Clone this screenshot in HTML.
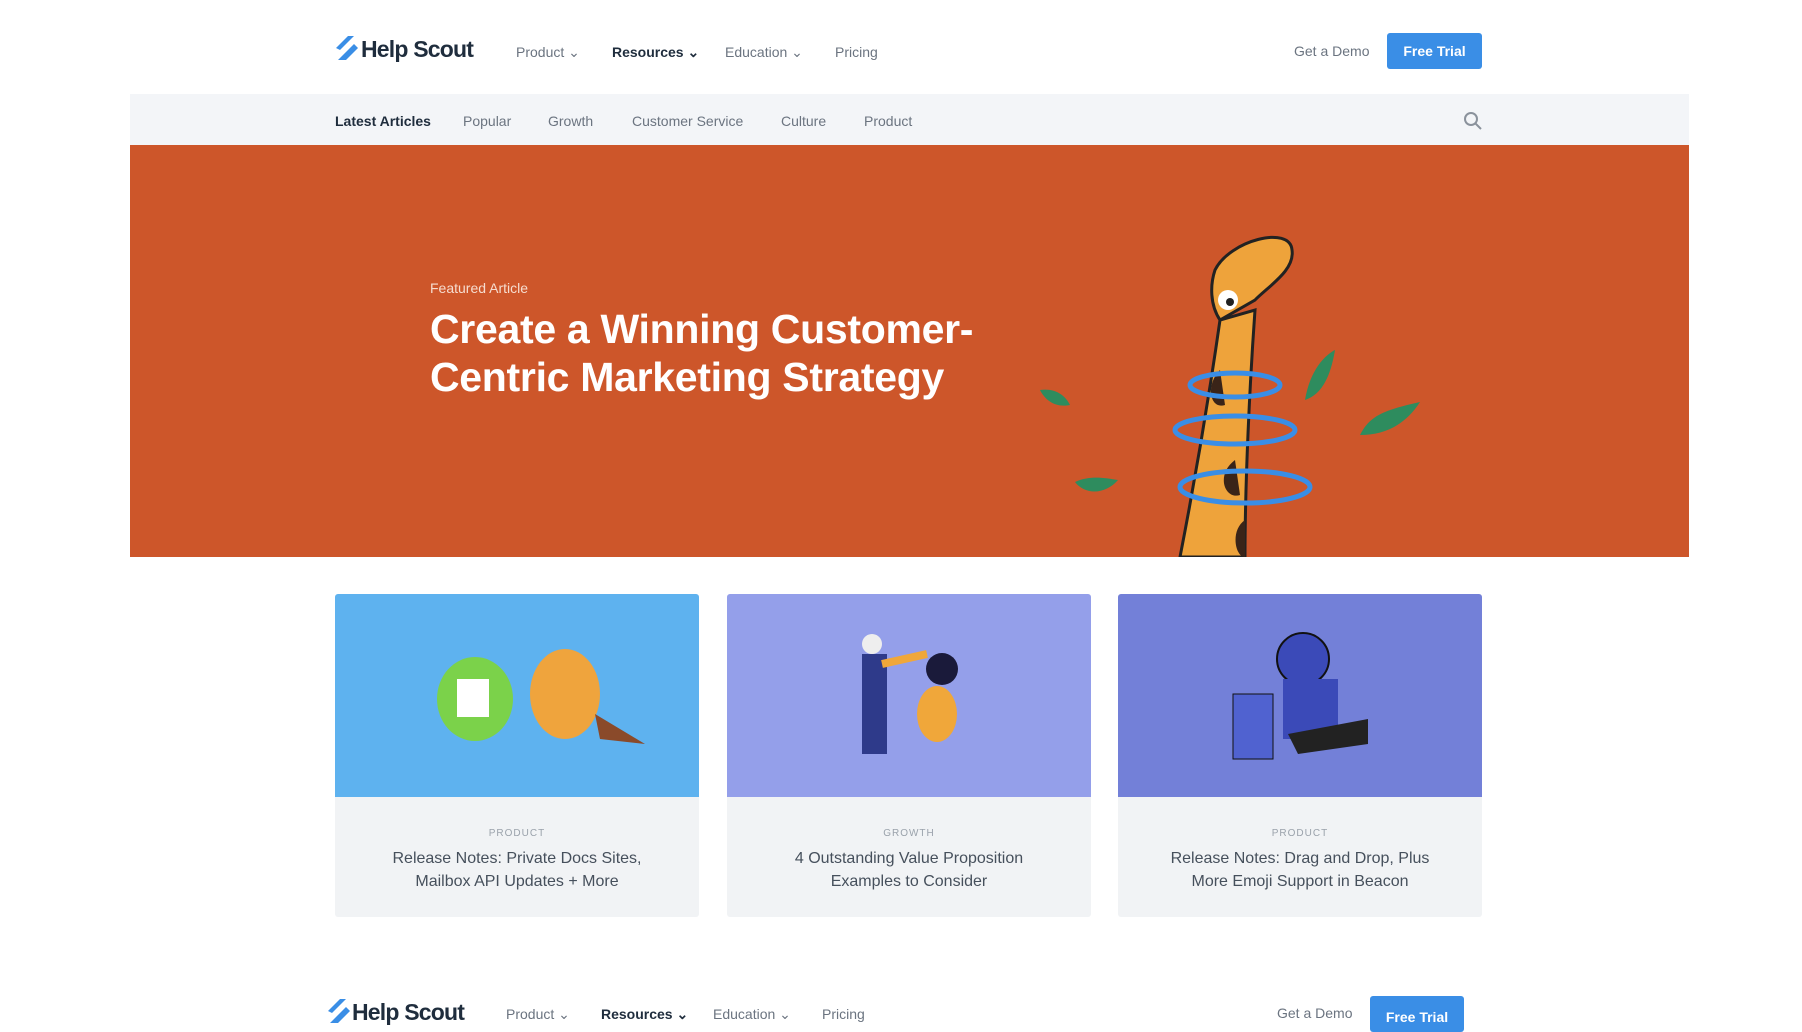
<!DOCTYPE html>
<html><head><meta charset="utf-8"><style>
*{margin:0;padding:0;box-sizing:border-box}
body{width:1802px;height:1018px;overflow:hidden;background:#fff;font-family:"Liberation Sans",sans-serif;position:relative}
.abs{position:absolute}
.nav{font-size:14px;color:#6b7480}
.logo{font-size:23px;font-weight:bold;color:#1f2d3d;letter-spacing:-0.8px}
.btn{background:#3a8ee6;color:#fff;font-weight:bold;font-size:14px;text-align:center;border-radius:3px}
.sub{font-size:14px;color:#6b7480;top:113px}
.card{position:absolute;top:594px;width:364px;height:323px;background:#f1f3f5;border-radius:3px;overflow:hidden;text-align:center}
.card .img{height:203px}
.card .cat{font-size:10px;letter-spacing:1px;color:#9aa2ab;margin-top:31px}
.card .t{font-size:16px;color:#46505c;line-height:23px;margin-top:8px}
</style></head><body>
<!-- header -->
<div class="abs" style="left:334px;top:34px;"><svg width="26" height="28" viewBox="0 0 26 28"><path d="M2 14 L14 2 L20 2 L6 16Z M4 26 L20 10 L24 14 L12 26Z M2 20 L18 4" fill="#3a8ee6"/></svg></div>
<div class="abs logo" style="left:361px;top:36px">Help Scout</div>
<div class="abs nav" style="left:516px;top:44px">Product ⌄</div>
<div class="abs nav" style="left:612px;top:44px;color:#1f2d3d;font-weight:bold">Resources ⌄</div>
<div class="abs nav" style="left:725px;top:44px">Education ⌄</div>
<div class="abs nav" style="left:835px;top:44px">Pricing</div>
<div class="abs nav" style="left:1294px;top:43px">Get a Demo</div>
<div class="abs btn" style="left:1387px;top:33px;width:95px;height:36px;line-height:36px">Free Trial</div>
<!-- subnav -->
<div class="abs" style="left:130px;top:94px;width:1559px;height:51px;background:#f3f5f8"></div>
<div class="abs sub" style="left:335px;color:#1f2d3d;font-weight:bold">Latest Articles</div>
<div class="abs sub" style="left:463px">Popular</div>
<div class="abs sub" style="left:548px">Growth</div>
<div class="abs sub" style="left:632px">Customer Service</div>
<div class="abs sub" style="left:781px">Culture</div>
<div class="abs sub" style="left:864px">Product</div>
<svg class="abs" style="left:1463px;top:111px" width="20" height="20" viewBox="0 0 20 20"><circle cx="8" cy="8" r="6" fill="none" stroke="#8a929c" stroke-width="2"/><path d="M12.5 12.5 L18 18" stroke="#8a929c" stroke-width="2"/></svg>
<!-- hero -->
<div class="abs" style="left:130px;top:145px;width:1559px;height:412px;background:#cd562a"></div>
<div class="abs" style="left:430px;top:280px;color:#f6dccf;font-size:14px">Featured Article</div>
<div class="abs" style="left:430px;top:305px;color:#fff;font-size:41px;font-weight:bold;line-height:48px;letter-spacing:-0.3px">Create a Winning Customer-<br>Centric Marketing Strategy</div>
<svg class="abs" style="left:1030px;top:230px" width="400" height="327" viewBox="0 0 400 327">
<path d="M150 327 C165 250 180 160 190 90 L225 80 C220 150 215 250 215 327Z" fill="#eea33b" stroke="#222" stroke-width="3"/>
<path d="M185 40 C200 10 260 -5 262 20 C265 40 240 55 225 70 L190 90 C180 75 180 55 185 40Z" fill="#eea33b" stroke="#222" stroke-width="3"/>
<circle cx="198" cy="70" r="10" fill="#fff"/><circle cx="200" cy="72" r="4" fill="#222"/>
<path d="M190 140 C175 155 180 180 195 175Z M205 230 C185 245 195 270 210 265Z M215 290 C200 300 205 327 215 327Z" fill="#3a2418"/>
<ellipse cx="205" cy="155" rx="45" ry="12" fill="none" stroke="#3a8ee6" stroke-width="5"/>
<ellipse cx="205" cy="200" rx="60" ry="14" fill="none" stroke="#3a8ee6" stroke-width="5"/>
<ellipse cx="215" cy="257" rx="65" ry="16" fill="none" stroke="#3a8ee6" stroke-width="5"/>
<path d="M10 160 C25 158 35 165 40 175 C25 178 15 170 10 160Z" fill="#2e8c5e"/>
<path d="M275 170 C280 140 295 125 305 120 C300 150 290 165 275 170Z" fill="#2e8c5e"/>
<path d="M330 205 C340 185 355 180 390 172 C375 195 355 205 330 205Z" fill="#2e8c5e"/>
<path d="M45 252 C60 245 75 248 88 250 C75 265 55 265 45 252Z" fill="#2e8c5e"/>
</svg>
<!-- cards -->
<div class="card" style="left:335px"><div class="img" style="background:#5eb2ef"><svg width="364" height="203"><ellipse cx="140" cy="105" rx="38" ry="42" fill="#7bd24a"/><rect x="122" y="85" width="32" height="38" fill="#fff"/><ellipse cx="230" cy="100" rx="35" ry="45" fill="#efa43d"/><path d="M260 120 L310 150 L265 145Z" fill="#8a4a2a"/></svg></div><div class="cat">PRODUCT</div><div class="t">Release Notes: Private Docs Sites,<br>Mailbox API Updates + More</div></div>
<div class="card" style="left:727px"><div class="img" style="background:#949fea"><svg width="364" height="203"><rect x="135" y="60" width="25" height="100" fill="#2e3a8a"/><circle cx="145" cy="50" r="10" fill="#eee"/><path d="M155 70 L200 60" stroke="#f0a73a" stroke-width="8"/><circle cx="215" cy="75" r="16" fill="#1a1a3a"/><ellipse cx="210" cy="120" rx="20" ry="28" fill="#f0a73a"/></svg></div><div class="cat">GROWTH</div><div class="t">4 Outstanding Value Proposition<br>Examples to Consider</div></div>
<div class="card" style="left:1118px"><div class="img" style="background:#7380d8"><svg width="364" height="203"><circle cx="185" cy="65" r="26" fill="#3b4ab8" stroke="#111" stroke-width="2"/><rect x="165" y="85" width="55" height="60" fill="#3b4ab8"/><rect x="115" y="100" width="40" height="65" fill="#5062d0" stroke="#111"/><path d="M170 140 L250 125 L250 150 L180 160Z" fill="#222"/></svg></div><div class="cat">PRODUCT</div><div class="t">Release Notes: Drag and Drop, Plus<br>More Emoji Support in Beacon</div></div>
<!-- bottom repeated header -->
<div class="abs" style="left:326px;top:997px;"><svg width="26" height="28" viewBox="0 0 26 28"><path d="M2 14 L14 2 L20 2 L6 16Z M4 26 L20 10 L24 14 L12 26Z" fill="#3a8ee6"/></svg></div>
<div class="abs logo" style="left:352px;top:999px">Help Scout</div>
<div class="abs nav" style="left:506px;top:1006px">Product ⌄</div>
<div class="abs nav" style="left:601px;top:1006px;color:#1f2d3d;font-weight:bold">Resources ⌄</div>
<div class="abs nav" style="left:713px;top:1006px">Education ⌄</div>
<div class="abs nav" style="left:822px;top:1006px">Pricing</div>
<div class="abs nav" style="left:1277px;top:1005px">Get a Demo</div>
<div class="abs btn" style="left:1370px;top:996px;width:94px;height:36px;padding-top:14px;line-height:14px">Free Trial</div>
</body></html>
